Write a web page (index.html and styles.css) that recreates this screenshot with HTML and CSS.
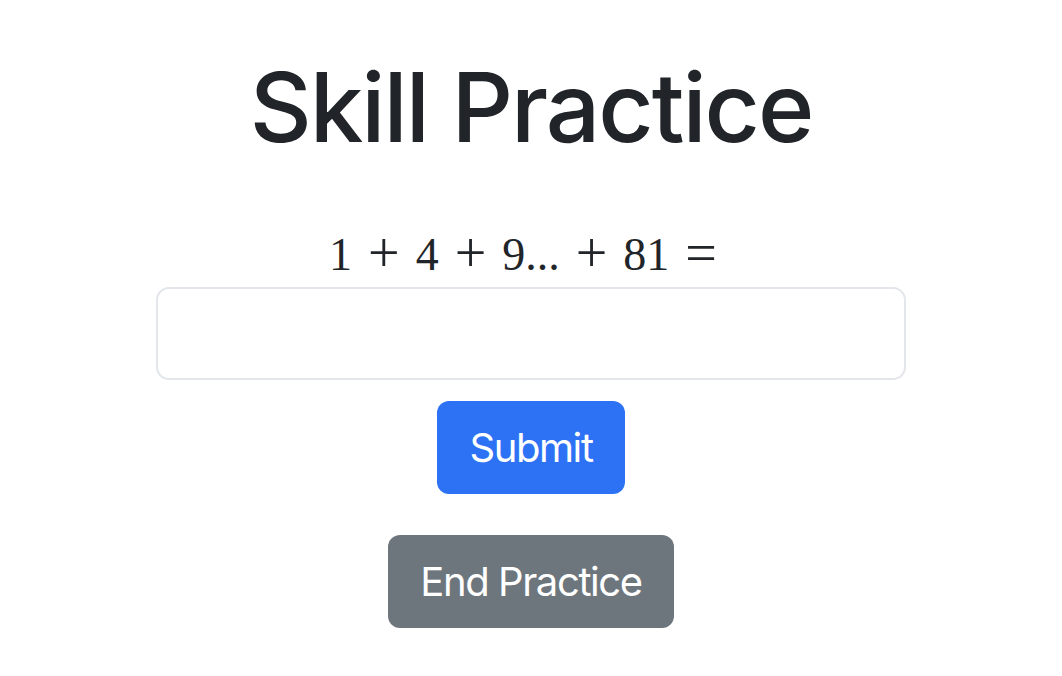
FILE: index.html
```html
<!DOCTYPE html>
<html lang="en">
<head>
<meta charset="utf-8">
<title>Skill Practice</title>
<link rel="stylesheet" href="styles.css">
</head>
<body>
<main class="page">
  <h1 class="title">Skill Practice</h1>
  <div class="problem">1<span class="op">+</span>4<span class="op">+</span>9...<span class="op">+</span>81<span class="op">=</span></div>
  <input class="answer" type="text" aria-label="Answer">
  <button class="btn btn-primary" type="button">Submit</button>
  <button class="btn btn-secondary end" type="button">End Practice</button>
</main>
</body>
</html>
```
FILE: styles.css
```css
html, body {
  margin: 0;
  padding: 0;
  background: #ffffff;
}
body {
  font-family: Inter, "Noto Sans", "Liberation Sans", sans-serif;
  color: #212529;
}
.page {
  display: flex;
  flex-direction: column;
  align-items: center;
  padding-top: 50px;
}
.title {
  margin: 0;
  font-size: 96px;
  font-weight: 500;
  line-height: 1.2;
  letter-spacing: -2px;
  color: #212529;
}
.problem {
  margin-top: 62px;
  font-family: "Liberation Serif", "DejaVu Serif", serif;
  font-size: 46px;
  line-height: 1.2;
  color: #212529;
  white-space: nowrap;
}
.op {
  display: inline-block;
  margin: 0 16px;
  font-size: 56px;
  line-height: 0;
  vertical-align: -2px;
}
.answer {
  box-sizing: border-box;
  margin-top: 5px;
  width: 750px;
  height: 93px;
  border: 2px solid #e3e6ea;
  border-radius: 13px;
  padding: 16px 32px;
  font-family: inherit;
  font-size: 40px;
  outline: none;
}
.btn {
  box-sizing: border-box;
  height: 93px;
  border: none;
  border-radius: 12px;
  padding: 0 32px;
  font-family: Inter, "Noto Sans", "Liberation Sans", sans-serif;
  font-size: 40px;
  font-weight: 400;
  letter-spacing: -1.4px;
  color: #ffffff;
  cursor: pointer;
}
.btn-primary {
  margin-top: 21px;
  background: #2d72f5;
}
.btn-secondary {
  background: #6d757d;
}
.end {
  margin-top: 41px;
}
```
